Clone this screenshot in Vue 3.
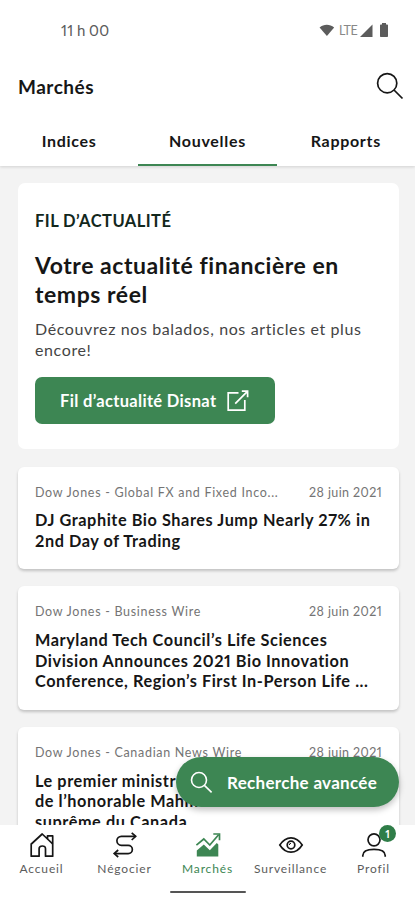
<template>
  <div class="screen">
    <header class="top">
      <div class="status-bar">
        <span class="clock">11 h 00</span>
        <div class="signals">
          <svg width="16" height="13" viewBox="0 0 17 14" aria-hidden="true">
            <path d="M.5 3.7C5-.3 11.500-.3 16.200 3.700L8.400 13z" fill="currentColor" />
          </svg>
          <span class="lte">LTE</span>
          <svg width="13" height="13" viewBox="0 0 13 13" aria-hidden="true">
            <path d="M12.500.500V13H0z" fill="currentColor" />
          </svg>
          <svg class="battery" width="8" height="14" viewBox="0 0 8 14" aria-hidden="true">
            <path d="M2 1.500V0h4v1.500h1.200c.5 0 .8.300.8.800V13c0 .600-.4 1-1 1H1c-.600 0-1-.400-1-1V2.300c0-.500.3-.800.8-.800z" fill="currentColor" />
          </svg>
        </div>
      </div>
      <div class="title-bar">
        <h1>Marchés</h1>
        <button type="button" class="icon-button" aria-label="Rechercher">
          <svg width="28" height="28" viewBox="0 0 28 28" fill="none" stroke="currentColor" stroke-width="1.7" aria-hidden="true">
            <circle cx="11.200" cy="11.200" r="9.600" />
            <path d="M18 18l8.500 8.500" />
          </svg>
        </button>
      </div>
      <nav class="tabs">
        <button
          v-for="tab in tabs"
          :key="tab"
          type="button"
          :class="{ active: tab === activeTab }"
          @click="activeTab = tab"
        >
          <span>{{ tab }}</span>
        </button>
      </nav>
    </header>

    <main class="content">
      <section class="feed">
        <p class="eyebrow">FIL D’ACTUALITÉ</p>
        <h2>Votre actualité financière en<br />temps réel</h2>
        <p class="intro">Découvrez nos balados, nos articles et plus<br />encore!</p>
        <button type="button" class="feed-button">
          <span>Fil d’actualité Disnat</span>
          <svg width="22" height="22" viewBox="0 0 22 22" fill="none" stroke="currentColor" stroke-width="1.700" aria-hidden="true">
            <path d="M11.500 2.900H1.200v17.300h16.600V10" />
            <path d="M14.800 1.200h5.800v6M20.200 1.600L8.200 13.600" />
          </svg>
        </button>
      </section>

      <article v-for="item in news" :key="item.source" class="news">
        <div class="meta">
          <span>{{ item.source }}</span>
          <time>28 juin 2021</time>
        </div>
        <h3>
          <span v-for="line in item.lines" :key="line">{{ line }}</span>
        </h3>
      </article>
    </main>

    <button type="button" class="fab">
      <svg width="23" height="23" viewBox="0 0 23 23" fill="none" stroke="currentColor" stroke-width="1.600" aria-hidden="true">
        <circle cx="9" cy="9" r="7.500" />
        <path d="M14.400 14.400l7.200 7" />
      </svg>
      <span>Recherche avancée</span>
    </button>

    <nav class="bottom">
      <div class="items">
        <a v-for="item in items" :key="item.name" :class="{ active: item.name === 'Marchés' }">
          <svg width="26" height="26" viewBox="0 0 26 26" fill="none" stroke="currentColor" stroke-width="1.700" aria-hidden="true">
            <template v-if="item.icon === 'home'">
              <path d="M1.800 12.500L13.200 2 18.500 7V3.800h5.200V24.200h-7.200v-7.500c0-1.700-1.100-2.700-3.200-2.700s-3.200 1-3.200 2.700v7.500H2.200V12.100" stroke-linejoin="round" />
              <path d="M18.500 7l5.200 4.800" />
            </template>
            <template v-else-if="item.icon === 'trade'">
              <path d="M23.500 4.300H9.400a4.500 4.500 0 0 0 0 9h6.800a4.150 4.150 0 0 1 0 8.300H2.800" />
              <path d="M19.700.800l4 3.500-4 3.700M6.200 18L2.200 21.600l4 3.400" />
            </template>
            <template v-else-if="item.icon === 'market'">
              <path d="M1.800 24.500V18.500l7-6 6 5.800 7-7.300 1.500 1.500v12z" fill="currentColor" stroke="none" />
              <path d="M1.400 13.200L8.800 7l6 6 8.800-10.300" />
              <path d="M18.300 2h6.200v6.300" />
            </template>
            <template v-else-if="item.icon === 'eye'">
              <path d="M1.800 13c3-4.700 6.800-7.200 11.200-7.200s8.200 2.500 11.200 7.200c-3 4.700-6.800 7.200-11.200 7.200S4.800 17.700 1.800 13z" />
              <circle cx="13" cy="13" r="3.800" />
              <path d="M11.300 13a1.700 1.700 0 0 1 1.700-1.700" stroke-width="1" />
            </template>
            <template v-else>
              <circle cx="13" cy="7.800" r="6" />
              <path d="M1.800 24.800v-1.300c0-4 3.600-6.200 11.200-6.200s11.200 2.200 11.200 6.200v1.300" />
            </template>
          </svg>
          <span class="label">{{ item.name }}</span>
          <span v-if="item.badge" class="badge">{{ item.badge }}</span>
        </a>
      </div>
      <div class="home-bar"></div>
    </nav>
  </div>
</template>

<script setup>
import { ref } from 'vue'

const tabs = ['Indices', 'Nouvelles', 'Rapports']
const activeTab = ref('Nouvelles')

const news = [
  {
    source: 'Dow Jones - Global FX and Fixed Inco...',
    lines: ['DJ Graphite Bio Shares Jump Nearly 27% in', '2nd Day of Trading'],
  },
  {
    source: 'Dow Jones - Business Wire',
    lines: [
      'Maryland Tech Council’s Life Sciences',
      'Division Announces 2021 Bio Innovation',
      'Conference, Region’s First In-Person Life ...',
    ],
  },
  {
    source: 'Dow Jones - Canadian News Wire',
    lines: ['Le premier ministr', 'de l’honorable Mahm', 'suprême du Canada'],
  },
]

const items = [
  { name: 'Accueil', icon: 'home' },
  { name: 'Négocier', icon: 'trade' },
  { name: 'Marchés', icon: 'market' },
  { name: 'Surveillance', icon: 'eye' },
  { name: 'Profil', icon: 'profile', badge: 1 },
]
</script>

<style>
body {
  margin: 0;
}
</style>

<style scoped>
.screen {
  position: relative;
  display: flex;
  flex-direction: column;
  width: 100%;
  height: 900px;
  overflow: hidden;
  background: #f3f3f3;
  color: #161616;
  font-family: Lato, 'Noto Sans', sans-serif;
  font-variant-numeric: proportional-nums;
}

button {
  border: 0;
  padding: 0;
  background: none;
  color: inherit;
  font: inherit;
  font-variant-numeric: proportional-nums;
}

h1,
h2,
h3,
p {
  margin: 0;
}

svg {
  display: block;
  flex: none;
}

.top {
  z-index: 1;
  flex: none;
  height: 166px;
  background: #fff;
  box-shadow: 0 1px 3px rgba(0, 0, 0, 0.14);
}

.status-bar {
  display: flex;
  align-items: center;
  justify-content: space-between;
  height: 60px;
  padding: 0 27px 0 61px;
  box-sizing: border-box;
  color: #5c5c5c;
}

.clock {
  font-size: 15px;
  letter-spacing: 0.4px;
  word-spacing: -1px;
}

.signals {
  display: flex;
  align-items: center;
}

.lte {
  margin: 0 3px 0 4px;
  font-size: 12.5px;
  letter-spacing: -0.6px;
  color: #888;
}

.battery {
  margin-left: 7px;
}

.title-bar {
  display: flex;
  align-items: center;
  justify-content: space-between;
  height: 54px;
  padding: 0 11px 0 18px;
}

.title-bar h1 {
  margin-top: -2px;
  font-size: 19px;
  font-weight: 700;
  letter-spacing: 0.5px;
}

.icon-button {
  margin-top: -2px;
}

.tabs {
  display: flex;
  height: 52px;
}

.tabs button {
  flex: 1;
  padding-top: 3px;
  box-sizing: border-box;
  border-bottom: 2px solid transparent;
  font-size: 16px;
  font-weight: 700;
  letter-spacing: 0.7px;
}

.tabs .active {
  border-bottom-color: #3d8653;
}

.content {
  display: flex;
  flex: 1;
  flex-direction: column;
  gap: 17.5px;
  min-height: 0;
  overflow: hidden;
  padding: 17px 16.5px 0 17.5px;
}

.feed {
  flex: none;
  height: 266px;
  padding: 27px 17.5px 0;
  box-sizing: border-box;
  border-radius: 7px;
  background: #fff;
}

.eyebrow {
  color: #12271c;
  font-size: 16.5px;
  font-weight: 700;
  line-height: 22px;
  letter-spacing: 0.45px;
}

.feed h2 {
  margin-top: 19px;
  font-size: 23px;
  font-weight: 700;
  line-height: 29px;
  letter-spacing: 0.55px;
  white-space: nowrap;
}

.intro {
  margin-top: 9px;
  color: #444;
  font-size: 16px;
  line-height: 21px;
  letter-spacing: 0.62px;
  white-space: nowrap;
}

.feed-button {
  display: flex;
  align-items: center;
  justify-content: space-between;
  width: 240px;
  height: 47px;
  margin-top: 17px;
  padding: 1px 26px 0 25px;
  box-sizing: border-box;
  border-radius: 7px;
  background: #3d8653;
  color: #fff;
  font-size: 16.5px;
  font-weight: 700;
  letter-spacing: 0.33px;
  white-space: nowrap;
}

.news {
  flex: none;
  padding: 17px 16.5px 17.5px 17.5px;
  border-radius: 6px;
  background: #fff;
  box-shadow: 0 2px 3px rgba(0, 0, 0, 0.2);
}

.meta {
  display: flex;
  justify-content: space-between;
  height: 18px;
  color: #747474;
  font-size: 12.5px;
  line-height: 18px;
  letter-spacing: 0.7px;
  white-space: nowrap;
}

.meta time {
  letter-spacing: 0.4px;
}

.news h3 {
  margin-top: 8.5px;
  font-size: 16.3px;
  font-weight: 700;
  line-height: 20.7px;
  letter-spacing: 0.56px;
  white-space: nowrap;
}

.news h3 span {
  display: block;
}

.fab {
  position: absolute;
  right: 16.5px;
  bottom: 93px;
  display: flex;
  align-items: center;
  gap: 14px;
  width: 222.5px;
  height: 50px;
  padding: 0 0 0 14px;
  border-radius: 25px;
  background: #3d8653;
  box-shadow: 0 3px 6px rgba(0, 0, 0, 0.25);
  color: #fff;
  font-size: 17px;
  font-weight: 700;
  letter-spacing: 0.3px;
  white-space: nowrap;
}

.bottom {
  z-index: 2;
  flex: none;
  height: 75px;
  background: #fff;
}

.items {
  display: flex;
  height: 66px;
}

.items a {
  position: relative;
  display: flex;
  flex: 1;
  flex-direction: column;
  align-items: center;
  padding-top: 7px;
}

.label {
  margin-top: 2px;
  color: #5c5c5c;
  font-size: 12px;
  line-height: 17px;
  letter-spacing: 0.85px;
}

.active .label,
.items .active {
  color: #3d8653;
}

.badge {
  position: absolute;
  top: 0;
  right: 19px;
  width: 17px;
  height: 17px;
  border-radius: 50%;
  background: #2f7d48;
  color: #fff;
  font-size: 11px;
  font-weight: 700;
  line-height: 17px;
  text-align: center;
}

.home-bar {
  width: 76px;
  height: 2px;
  margin: 0 auto;
  border-radius: 1px;
  background: #555;
}
</style>
